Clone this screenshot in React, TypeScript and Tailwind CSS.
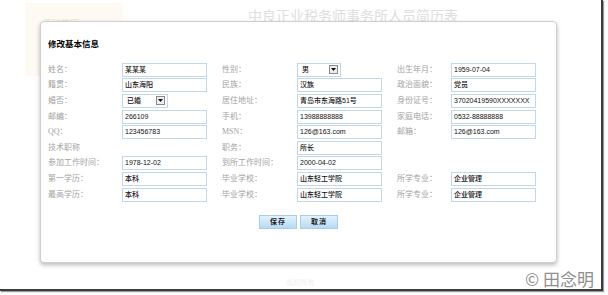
type Cell =
  | { label: string; value?: string; select?: boolean; w?: string }
  | null

const rows: Cell[][] = [
  [
    { label: '姓名：', value: '某某某' },
    { label: '性别：', value: '男', select: true, w: 'w-[44px]' },
    { label: '出生年月：', value: '1959-07-04' },
  ],
  [
    { label: '籍贯：', value: '山东海阳' },
    { label: '民族：', value: '汉族' },
    { label: '政治面貌：', value: '党员' },
  ],
  [
    { label: '婚否：', value: '已婚', select: true, w: 'w-[46px]' },
    { label: '居住地址：', value: '青岛市东海路51号' },
    { label: '身份证号：', value: '37020419590XXXXXXX' },
  ],
  [
    { label: '邮编：', value: '266109' },
    { label: '手机：', value: '13988888888' },
    { label: '家庭电话：', value: '0532-88888888' },
  ],
  [
    { label: 'QQ：', value: '123456783' },
    { label: 'MSN：', value: '126@163.com' },
    { label: '邮箱：', value: '126@163.com' },
  ],
  [{ label: '技术职称' }, { label: '职务：', value: '所长' }, null],
  [
    { label: '参加工作时间：', value: '1978-12-02' },
    { label: '到所工作时间：', value: '2000-04-02' },
    null,
  ],
  [
    { label: '第一学历：', value: '本科' },
    { label: '毕业学校：', value: '山东轻工学院' },
    { label: '所学专业：', value: '企业管理' },
  ],
  [
    { label: '最高学历：', value: '本科' },
    { label: '毕业学校：', value: '山东轻工学院' },
    { label: '所学专业：', value: '企业管理' },
  ],
]

function Field({ value }: { value: string }) {
  return (
    <div className="w-[85px] h-[14px] border border-[#c2d8ea] bg-white px-[2px] font-['Liberation_Sans','Noto_Sans_CJK_SC',sans-serif] text-[7px] leading-[12px] font-medium text-[#111] overflow-hidden whitespace-nowrap">
      {value}
    </div>
  )
}

function Select({ value, w }: { value: string; w: string }) {
  return (
    <div
      className={`${w} h-[14px] border border-[#c2d8ea] bg-white pl-[4px] pr-[2px] flex items-center justify-between font-['Liberation_Sans','Noto_Sans_CJK_SC',sans-serif] text-[7px] font-medium text-[#111]`}
    >
      <span>{value}</span>
      <span className="w-[9px] h-[9px] border border-[#8a8a8a] bg-[#eeeeee] flex items-center justify-center">
        <svg width="5" height="3" viewBox="0 0 5 3">
          <path d="M0 0h5L2.5 3z" fill="#111" />
        </svg>
      </span>
    </div>
  )
}

export default function App() {
  return (
    <div className="w-[608px] h-[295px] bg-white overflow-hidden">
      <div className="relative w-[603px] h-[291px] border-r-[2px] border-b-[2px] border-[#3c3c3c] shadow-[1px_1px_1px_#9a9a9a] flex flex-col font-['Liberation_Serif','Noto_Sans_CJK_SC',serif]">
        {/* page behind the dialog */}
        <div className="flex">
          <div className="ml-[25px] mt-[3px] w-[98px] h-[73px] bg-[#fdfaf3] pl-[18px] pt-[7px]">
            <span className="text-[9px] text-[#e8dcc8]">添加简历</span>
          </div>
          <div className="ml-[125px] mt-[8px] text-[14px] leading-[18px] text-[#dedede]">
            中良正业税务师事务所人员简历表
          </div>
        </div>
        <div className="mt-auto mb-[1px] text-center text-[7px] text-[#f0f0f0]">
          版权所有
        </div>

        {/* dialog */}
        <div className="absolute left-[40px] top-[21px] w-[517px] h-[242px] bg-white border border-[#cfcfcf] rounded-[4px] shadow-[0_2px_4px_rgba(0,0,0,0.28)] px-[7px]">
          <div className="mt-[16px] h-[12px] leading-[12px] text-[8.5px] font-bold text-black">
            修改基本信息
          </div>
          <div className="mt-[12px] grid grid-cols-[74px_100px_75px_100px_54px_85px] auto-rows-[15.6px] items-center">
            {rows.map((row, r) =>
              row.map((cell, c) =>
                cell === null
                  ? [<div key={`${r}-${c}-a`} />, <div key={`${r}-${c}-b`} />]
                  : [
                      <div
                        key={`${r}-${c}-a`}
                        className="text-[8px] leading-[12px] text-[#a3a3a3] whitespace-nowrap"
                      >
                        {cell.label}
                      </div>,
                      <div key={`${r}-${c}-b`}>
                        {cell.value === undefined ? null : cell.select ? (
                          <Select value={cell.value} w={cell.w ?? 'w-[46px]'} />
                        ) : (
                          <Field value={cell.value} />
                        )}
                      </div>,
                    ]
              )
            )}
          </div>
          <div className="mt-[12.5px] flex justify-center gap-[3px]">
            {['保存', '取消'].map((t) => (
              <button
                key={t}
                className="w-[38px] h-[14px] border border-[#a9cde8] bg-gradient-to-b from-[#e2f2fd] to-[#b6daf5] font-['Liberation_Sans','Noto_Sans_CJK_SC',sans-serif] text-[7px] font-bold tracking-[1px] text-[#222] leading-[12px]"
              >
                {t}
              </button>
            ))}
          </div>
        </div>

        <div className="absolute right-[7px] bottom-[-1px] font-['Noto_Sans_CJK_SC',sans-serif] text-[17px] leading-[22px] text-[#8e8e8e]">
          © 田念明
        </div>
      </div>
    </div>
  )
}
